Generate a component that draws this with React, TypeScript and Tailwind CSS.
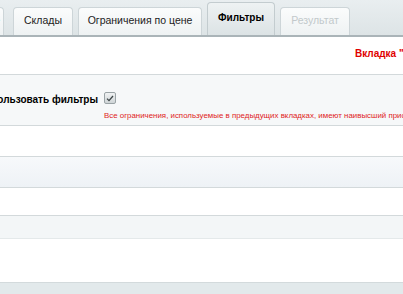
import React from "react";

const font = { fontFamily: '"Liberation Sans", Arial, sans-serif' };

function Tab({ label, active, disabled, className = "" }: { label: string; active?: boolean; disabled?: boolean; className?: string }) {
  if (active) {
    return (
      <div className={`flex h-[33px] items-center rounded-t-[4px] border border-b-0 border-[#c3cccf] bg-gradient-to-b from-[#eef2f3] to-[#dce3e5] px-[13px] pb-[3px] text-[10px] font-bold text-black ${className}`}>
        {label}
      </div>
    );
  }
  return (
    <div className={`flex h-[28px] items-center whitespace-nowrap rounded-t-[4px] border border-b-0 border-[#cdd5d8] bg-gradient-to-b from-[#fbfcfc] to-[#eef2f3] px-[11px] pb-[1px] text-[10.5px] ${disabled ? "text-[#c2c9cb]" : "text-[#222]"} ${className}`}>
      {label}
    </div>
  );
}

export default function App() {
  return (
    <div className="h-[294px] w-[403px] overflow-hidden bg-white" style={font}>
      {/* tab bar */}
      <div className="flex h-[37px] items-end gap-[5px] overflow-hidden border-b-2 border-[#aab4b8] bg-gradient-to-b from-[#e9eef0] to-[#dde4e6]">
        <Tab label="Основное" className="-ml-[60px] w-[64px]" />
        <Tab label="Склады" className="ml-[4px] w-[60px] justify-center" />
        <Tab label="Ограничения по цене" className="w-[124px] justify-center" />
        <Tab label="Фильтры" active className="w-[68px] justify-center" />
        <Tab label="Результат" disabled className="w-[70px] justify-center" />
      </div>

      {/* content */}
      <div className="flex h-[38px] items-center justify-start border-b border-[#d3d9db] pl-[355px] pb-[4px]">
        <span className="whitespace-nowrap text-[10px] font-bold text-[#e00000]">Вкладка "Фильтры"</span>
      </div>

      <div className="flex h-[51px] border-b border-[#d3d9db] bg-[#f6f8f9]">
        <div className="flex w-[99px] shrink-0 justify-end overflow-hidden pt-[17px]">
          <span className="whitespace-nowrap pr-[1px] text-[10px] font-bold text-black">Использовать фильтры</span>
        </div>
        <div className="flex min-w-0 flex-col pl-[5px] pt-[17px]">
          <div className="flex h-[12px] w-[12px] items-center justify-center rounded-[2px] border border-[#9aa3a6] bg-gradient-to-b from-[#f0f2f3] to-[#cfd5d7]">
            <svg width="8" height="7" viewBox="0 0 8 7" fill="none">
              <path d="M1 3.6 L3 5.6 L7 1" stroke="#3c4446" strokeWidth="1.3" />
            </svg>
          </div>
          <span className="mt-[6px] whitespace-nowrap text-[7.9px] text-[#e02424]">
            Все ограничения, используемые в предыдущих вкладках, имеют наивысший приоритет
          </span>
        </div>
      </div>

      <div className="h-[31px] border-b border-[#d3d9db] bg-white" />
      <div className="h-[31px] border-b border-[#d3d9db] bg-gradient-to-b from-[#f7f9fb] to-[#eef2f6]" />
      <div className="h-[28px] border-b border-[#d3d9db] bg-white" />
      <div className="h-[23px] border-b border-[#e4e9ea] bg-[#f3f6f7]" />
      <div className="h-[43px] bg-white" />
      <div className="h-[12px] border-t border-[#d3dadc] bg-[#e2e9eb]" />
    </div>
  );
}
